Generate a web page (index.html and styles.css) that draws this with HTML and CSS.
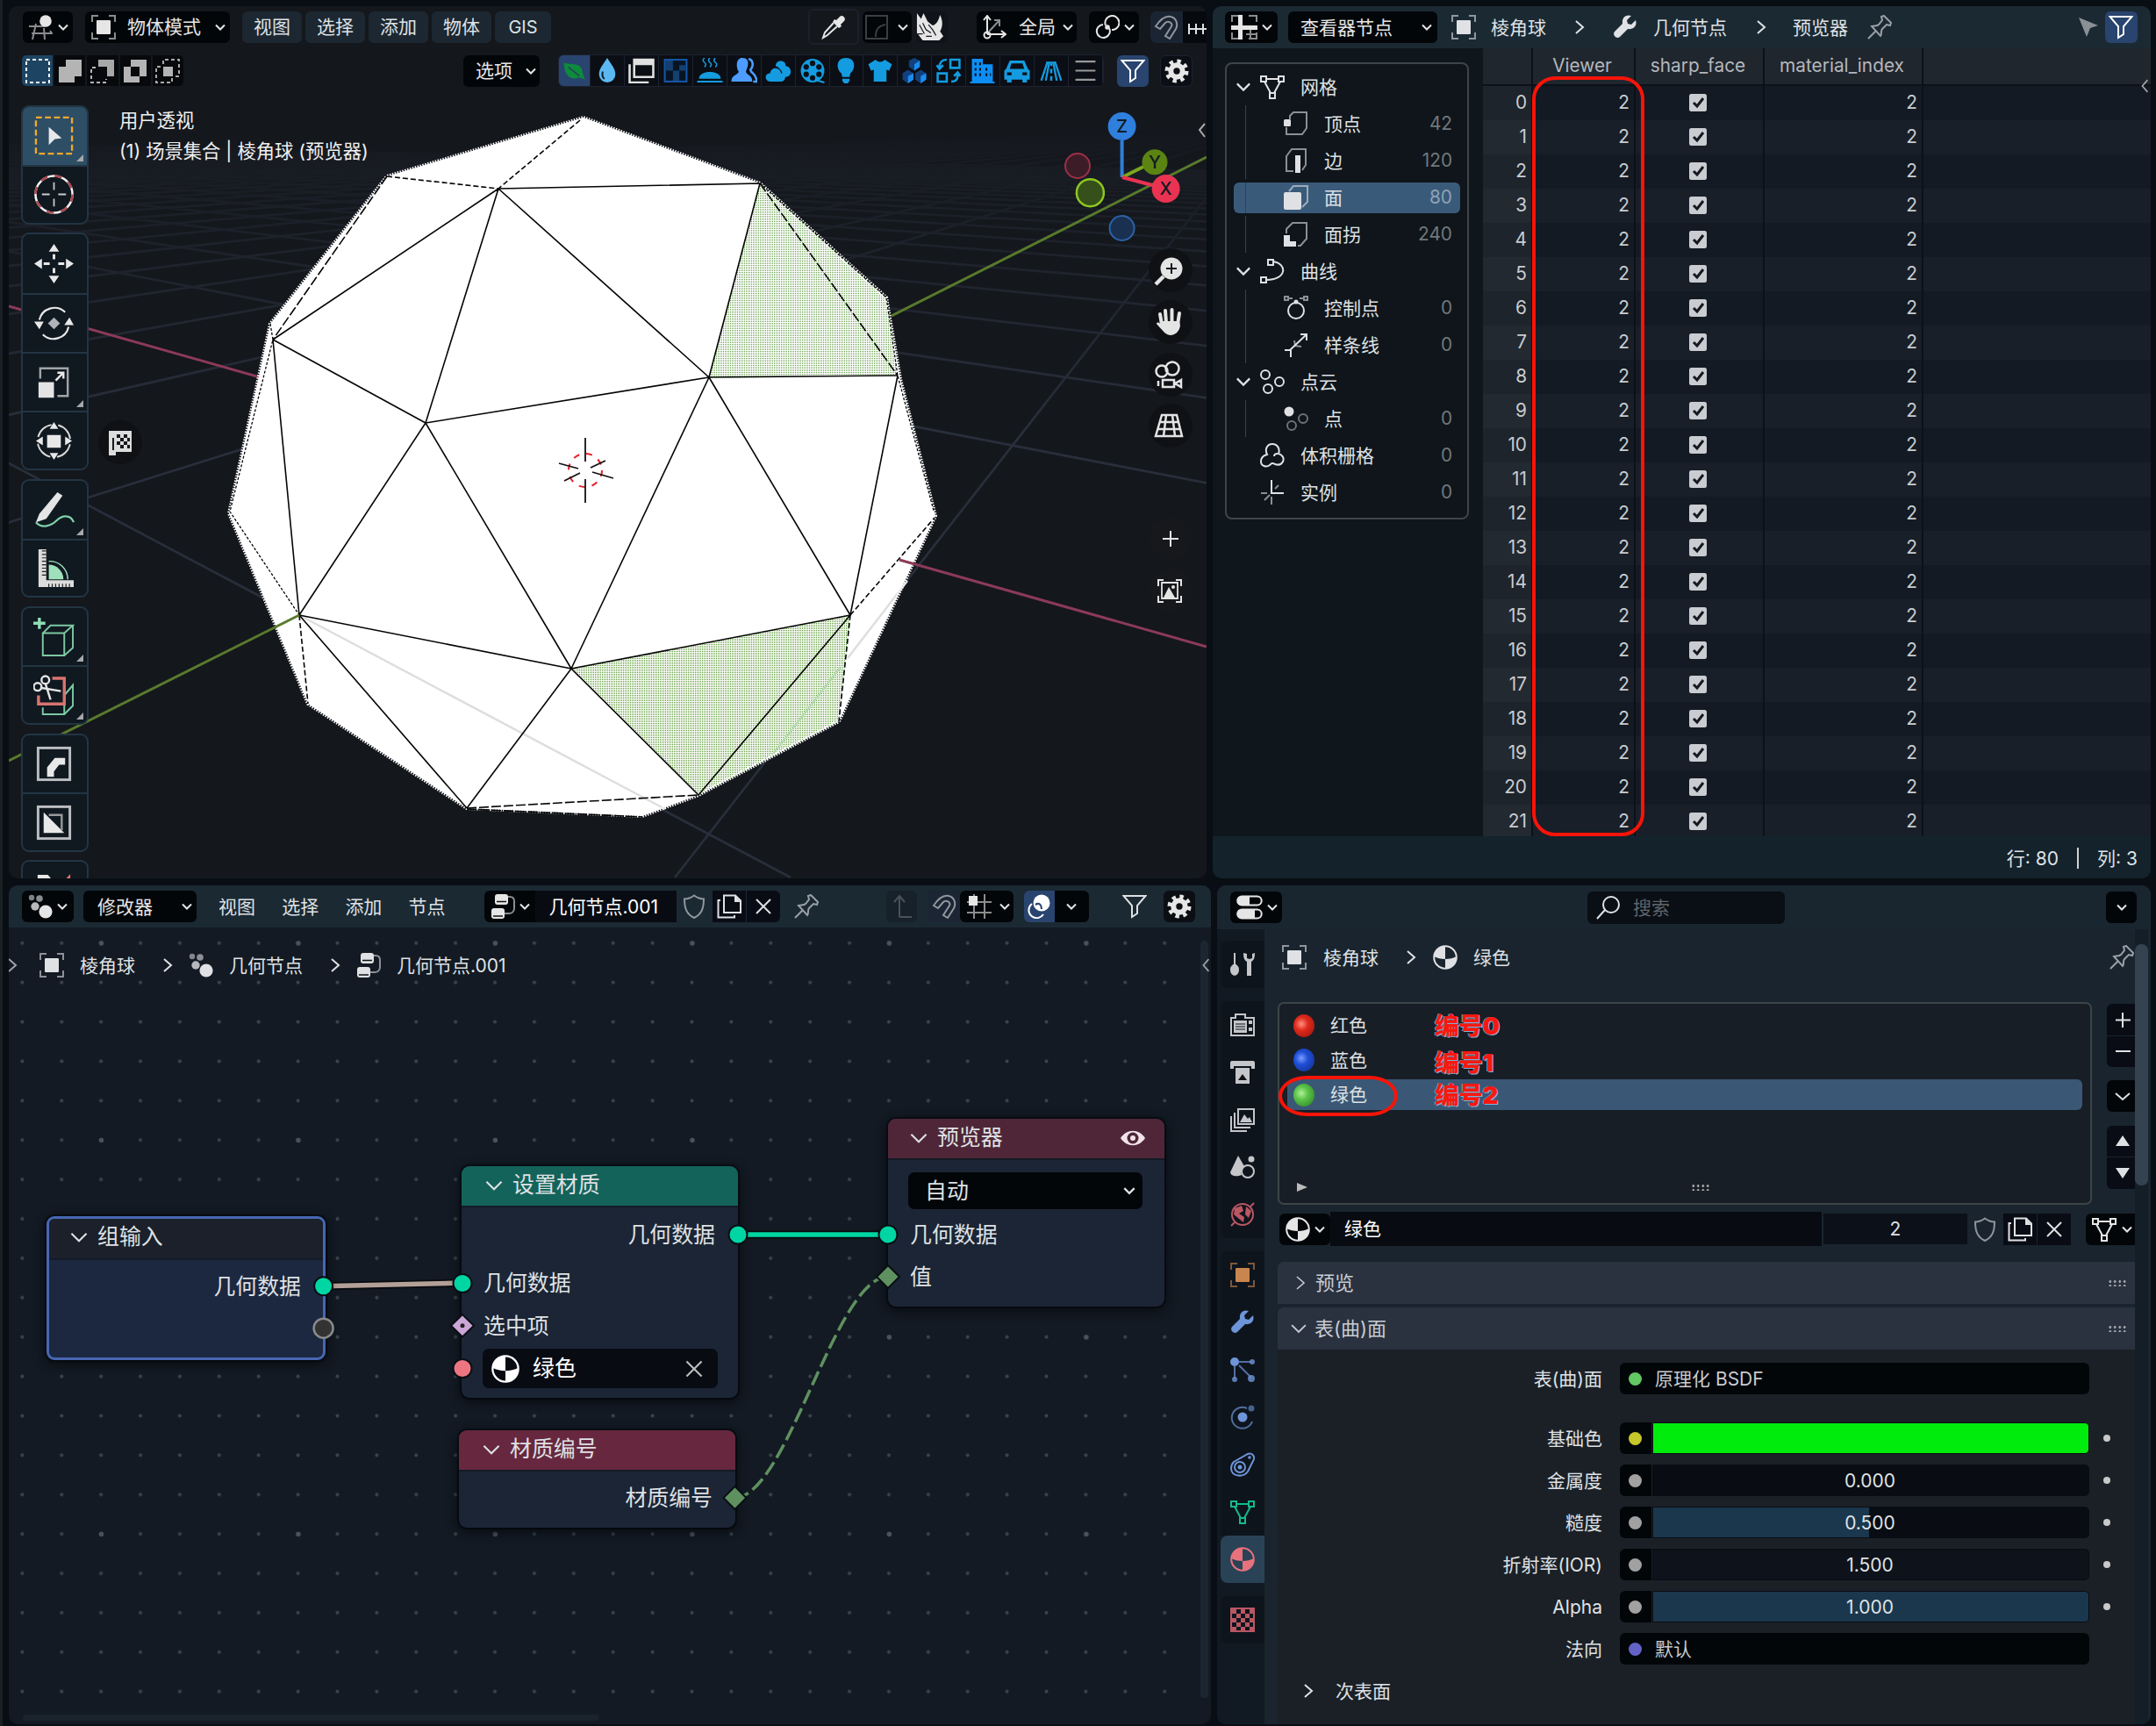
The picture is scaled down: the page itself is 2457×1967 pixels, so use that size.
FILE: index.html
```html
<!DOCTYPE html>
<html lang="zh-CN">
<head>
<meta charset="utf-8">
<title>Blender</title>
<link rel="stylesheet" href="styles.css">
</head>
<body>
<svg class="defs" width="0" height="0">
  <defs>
    <pattern id="dither" width="2" height="2" patternUnits="userSpaceOnUse"><rect width="2" height="2" fill="#fff"/><rect width="1" height="1" fill="#5f9a42"/></pattern>
    <pattern id="dither2" width="2" height="2" patternUnits="userSpaceOnUse"><rect width="2" height="2" fill="#f8fbf5"/><rect width="1" height="1" fill="#579632"/></pattern>
    <linearGradient id="fade" x1="0" y1="150" x2="0" y2="480" gradientUnits="userSpaceOnUse"><stop offset="0" stop-color="#000"/><stop offset=".1" stop-color="#333"/><stop offset="1" stop-color="#fff"/></linearGradient>
    <mask id="far" maskUnits="userSpaceOnUse" x="0" y="0" width="1400" height="1010"><rect width="1400" height="1010" fill="url(#fade)"/></mask>
  </defs>
  <symbol id="chev" viewBox="0 0 14 14"><path class="l" d="M2 4.5l5 5 5-5"/></symbol>
  <symbol id="right" viewBox="0 0 14 20"><path class="l" d="M3 3l8 7-8 7"/></symbol>
  <symbol id="left" viewBox="0 0 14 20"><path class="l" d="M11 2l-7 8 7 8"/></symbol>
  <symbol id="obj" viewBox="0 0 28 28"><path class="l dim" d="M1 8V1h7M20 1h7v7M27 20v7h-7M8 27H1v-7"/><rect x="6" y="6" width="16" height="16" rx="1" fill="currentColor"/></symbol>
  <symbol id="view3d" viewBox="0 0 28 28"><path class="l dim" d="M0 13h16M3 21h24M8 10L4 28M17 15l1 13M9 13h9M24 18l2 3"/><circle cx="19" cy="7" r="6.8" fill="currentColor"/></symbol>
  <symbol id="sheet" viewBox="0 0 30 28"><path class="l dim" d="M1 8V1h10M20 1h9v7M29 20v7h-9M11 27H1v-7M17 22h12M22 17v10"/><path d="M0 12h30v5H0zM8 0h5v28H8z" fill="currentColor"/></symbol>
  <symbol id="geo" viewBox="0 0 28 28"><g fill="currentColor"><circle cx="4" cy="4" r="3.2" opacity=".55"/><circle cx="13" cy="5" r="3.8" opacity=".6"/><circle cx="8" cy="14" r="4.7" opacity=".8"/><circle cx="20" cy="20" r="7.6"/></g></symbol>
  <symbol id="tree" viewBox="0 0 28 28"><g fill="currentColor"><rect x="5" y="0" width="15" height="12" rx="3"/><rect x="1" y="16" width="15" height="12" rx="3"/></g><path d="M7 8.500h11M3 25h11" stroke="#111" stroke-width="1.500"/><path class="l dim" d="M20 3h2c4 0 5 2 5 5v8c0 4-3 6-6 6h-5"/></symbol>
  <symbol id="props" viewBox="0 0 30 28"><rect x="1.200" y="1.500" width="27.500" height="10" rx="5" class="l"/><rect x="1.200" y="16.500" width="27.500" height="10" rx="5" class="l"/><path d="M6 1.500h9v10H6a5 5 0 0 1 0-10zM6 16.500h15v10H6a5 5 0 0 1 0-10z" fill="currentColor"/></symbol>
  <symbol id="mat" viewBox="0 0 28 28"><circle cx="14" cy="14" r="12.800" class="l"/><path d="M14 1v15c-5 0-9-1-13-3C2 6 7 1 14 1zM14 16c5 0 9-1 13-3 0 8-5 14-13 14z" fill="currentColor"/></symbol>
  <symbol id="pin" viewBox="0 0 28 28"><path class="l" d="M1 27l9-9M5 13c3-1 6 0 8-2l4-5-1-4 3-1 8 8-1 3-4-1-5 5c-2 2 0 5-2 8z"/></symbol>
  <symbol id="shield" viewBox="0 0 28 28"><path class="l" d="M14 1.500c4 3 7 4 11 4 0 10-2 17-11 21.500C5 22.500 3 15.500 3 5.500c4 0 7-1 11-4z"/></symbol>
  <symbol id="copy" viewBox="0 0 28 28"><path class="l" d="M8 1.500h13l6 6V21H8zM4 7H1.500v19.500H20V24"/><path d="M20 1v8h7z" fill="currentColor"/></symbol>
  <symbol id="x" viewBox="0 0 28 28"><path class="l" d="M6 6l16 16M22 6L6 22"/></symbol>
  <symbol id="filter" viewBox="0 0 28 28"><path class="l" d="M1.500 2h25l-9.500 11v9l-6 4V13z"/></symbol>
  <symbol id="gear" viewBox="0 0 28 28"><circle cx="14" cy="14" r="6.700" fill="none" stroke="currentColor" stroke-width="6"/><circle cx="14" cy="14" r="11" fill="none" stroke="currentColor" stroke-width="5" stroke-dasharray="4.300 4.340"/></symbol>
  <symbol id="magnet" viewBox="0 0 28 28"><path class="l" d="M2 13C8 4 14 1 19 2c6 1 9 8 6 14l-7 11-5-3 7-11c2-4-4-7-7-4l-6 7z"/></symbol>
  <symbol id="snap" viewBox="0 0 28 28"><path class="l dim" d="M0 9h28M0 21h28M8 0v28M20 0v28"/><rect x="2" y="2" width="10" height="11" fill="currentColor"/></symbol>
  <symbol id="inc" viewBox="0 0 28 28"><path class="l" d="M1 8v12M9 8v12M17 8v12M25 8v12M0 14h28"/></symbol>
  <symbol id="dropper" viewBox="0 0 28 28"><path d="M17 6l4-4c3-3 8 2 5 5l-4 4 1 2-3 2-7-7 2-3z" fill="currentColor"/><path class="l" d="M14 9L4 20l-2 6 5-3L18 13"/></symbol>
  <symbol id="bevel" viewBox="0 0 28 28"><path class="l" d="M2 1h24v26H2z"/><path class="l" d="M13 25c0-8 2-12 11-14"/></symbol>
  <symbol id="rhino" viewBox="0 0 34 34"><path d="M1 0l5 7 3-7 5 10 6 5c5-2 7-6 9-13 4 8 3 15 0 20l4 6-5 5H8L1 24z" fill="currentColor"/><path d="M8 12l4 8 6 4M4 14l6 11M20 20l4 7M2 25h6M12 28h7M15 14l5 6" stroke="#15181d" stroke-width="1.300" fill="none"/></symbol>
  <symbol id="orient" viewBox="0 0 28 28"><path class="l" d="M6 22V2M2 6l4-5 4 5M6 22h20M22 18l5 4-5 4"/><path class="l dim" d="M8 19L20 6M14 6h6v7"/><circle cx="6" cy="23" r="3.500" fill="none" stroke="currentColor" stroke-width="2"/></symbol>
  <symbol id="pivot" viewBox="0 0 28 28"><path class="l" d="M12 12a8 8 0 1 1 7 5M16 15a7.500 7.500 0 1 1-7-4"/><circle cx="14" cy="14" r="2.800" fill="currentColor"/></symbol>
  <symbol id="overlay" viewBox="0 0 28 28"><circle cx="17" cy="10" r="9.500" fill="currentColor"/><path class="l" d="M6 11a9 9 0 1 0 13 12"/><path d="M10 12c4-3 7 0 7 5" fill="none" stroke="#2b4570" stroke-width="2.200"/></symbol>
  <symbol id="up" viewBox="0 0 28 28"><path class="l" d="M12 26V3M6 9l6-7 6 7M12 26h14"/></symbol>
  <symbol id="search" viewBox="0 0 28 28"><circle cx="17" cy="11" r="9" class="l"/><path class="l" d="M10 17L1 27"/></symbol>
  <symbol id="wrench" viewBox="0 0 28 28"><path d="M26 6l-5 5-4-1-1-4 5-5c-6-2-11 2-10 9l-9 9c-3 4 2 9 6 6l9-9c7 1 11-4 9-10z" fill="currentColor"/></symbol>
  <symbol id="mesh" viewBox="0 0 28 28"><path class="l" d="M1 2h6v6H1zM21 2h6v6h-6zM11 21h6v6h-6zM7 5h14M5 8l7 13M23 8l-7 13"/></symbol>
  <symbol id="vert" viewBox="0 0 28 28"><path class="l dim" d="M7 9V5l4-4h15v18l-5 7H3v-8"/><rect x="0" y="9" width="8" height="8" rx="1.500" fill="currentColor"/></symbol>
  <symbol id="edge" viewBox="0 0 28 28"><path class="l dim" d="M11 26H3V9l6-8h16v18l-4 6"/><rect x="13" y="8" width="6" height="20" fill="currentColor"/></symbol>
  <symbol id="face" viewBox="0 0 28 28"><path class="l dim" d="M6 7l5-6h16v18l-6 6"/><rect x="0" y="8" width="20" height="20" rx="2" fill="currentColor"/></symbol>
  <symbol id="corner" viewBox="0 0 28 28"><path class="l dim" d="M3 13V8l7-7h16v18l-7 8h-3"/><path d="M0 15h7v7h7v6H0z" fill="currentColor"/></symbol>
  <symbol id="curve" viewBox="0 0 28 28"><path class="l" d="M9 1h6v6H9zM1 21h6v6H1zM15 3c17 3 15 21-8 21"/></symbol>
  <symbol id="cpt" viewBox="0 0 28 28"><circle cx="14" cy="17" r="9" class="l"/><path class="l dim" d="M1 1h4v4H1zM23 1h4v4h-4zM5 3h5M18 3h5"/><circle cx="14" cy="7" r="2.500" fill="currentColor"/></symbol>
  <symbol id="spline" viewBox="0 0 28 28"><path class="l" d="M7 20L25 3M19 2h7v7M1 20h7v8"/><path class="l dim" d="M12 9l1 6 7 1"/></symbol>
  <symbol id="cloud3" viewBox="0 0 28 28"><circle cx="6" cy="6" r="5" class="l"/><circle cx="22" cy="14" r="5" class="l"/><circle cx="9" cy="22" r="5" class="l"/></symbol>
  <symbol id="pt" viewBox="0 0 28 28"><circle cx="6" cy="6" r="5.500" fill="currentColor"/><g opacity=".45"><circle cx="22" cy="14" r="5" class="l"/><circle cx="9" cy="22" r="5" class="l"/></g></symbol>
  <symbol id="vol" viewBox="0 0 28 28"><path class="l" d="M8 13c-3-6 0-12 6-12s9 6 7 11c4 1 7 5 5 9-2 4-6 4-9 3-3-2-4-1-6 1-4 3-10 1-10-4 0-4 3-7 7-8zM20 12c-3 0-4 1-4 3"/></symbol>
  <symbol id="inst" viewBox="0 0 28 28"><path class="l" d="M13 0v15h14"/><path class="l dim" d="M1 15h7M13 19v9M5 23l6-6M17 10l4-4"/></symbol>
</svg>

<div class="app">
<div class="row top">

<section class="area view3d">
  <svg class="scene" viewBox="10 7 1365 994">
    <g id="floor" mask="url(#far)"></g>
    <path class="ax g" d="M1375 179L1016 360"/><path class="ax r" d="M10 349L300 431"/>
    <polygon fill="#fff" points="665,134 866,209 1010,339 1026,432 1066,588 956,822 796,906 732,930 532,921 351,802 261,585 308,369 441,201"/>
    <polygon fill="url(#dither)" points="866,209 808,430 1023,428 1010,339"/>
    <polygon fill="url(#dither2)" points="651,762 969,701 956,822 796,906"/>
    <path d="M341 701L758 922" stroke="#dedede" stroke-width="2.500"/><path d="M1034 662L966 750" stroke="#dedede" stroke-width="2.500"/><path d="M958 760L878 863" stroke="#b4dcae" stroke-width="2.500"/>
    <path class="rim" d="M665 134L866 209L1010 339L1026 432L1066 588L956 822L796 906L732 930L532 921L351 802L261 585L308 369L441 201Z"/>
    <path class="edge" d="M568 215L866 209M568 215L311 387M568 215L485 482M568 215L808 430M311 387L485 482M311 387L341 701M485 482L808 430M485 482L341 701M485 482L651 762M808 430L866 209M808 430L1023 428M808 430L651 762M808 430L969 701M1023 428L969 701M341 701L651 762M341 701L532 921M651 762L532 921M651 762L969 701M651 762L796 906M969 701L796 906"/>
    <path class="edge dash" d="M661 137L568 215M441 201L568 215M341 701L351 802M969 701L956 822M969 701L1065 590"/>
    <path class="edge long" d="M441 201L311 387M532 921L796 906M866 209L1023 428"/>
    <path class="edge dot" d="M308 369L311 387L262 583L341 701M866 209L1010 339L1023 428L1064 582"/>
    <path class="edge long" d="M532 922L732 931"/>
    <path class="ax g" d="M10 867L341 701"/><path class="ax r" d="M1025 638L1375 737"/>
    <g transform="translate(667 536)"><circle r="19" fill="none" stroke="#e8202a" stroke-width="2" stroke-dasharray="7 8"/><path d="M0-37v27M0 10v27M-30-8l22 6M8 2l24 7M-24 12L-6 3M6-3l17-8" stroke="#111" stroke-width="1.800"/></g>
    <g class="giz">
      <path d="M1278.600 202v-42" stroke="#2f7fdc"/><path d="M1279 202l28-14" stroke="#7aa81c"/><path d="M1279 202l34 9" stroke="#ea3352"/>
      <circle cx="1228" cy="189" r="14" fill="#3c1c27" stroke="#9c3049" stroke-width="2"/><circle cx="1242.400" cy="219.700" r="15.500" fill="#36501c" stroke="#8fc81e" stroke-width="2.500"/><circle cx="1278.600" cy="260" r="14" fill="#1a3050" stroke="#2b63a8" stroke-width="2"/>
      <circle cx="1278.600" cy="144" r="16" fill="#2f7fdc"/><circle cx="1316" cy="184.700" r="14.500" fill="#5b8413"/><circle cx="1328.600" cy="215" r="16" fill="#ea3352"/>
      <text x="1278.600" y="151">Z</text><text x="1316" y="192">Y</text><text x="1328.600" y="222">X</text>
    </g>
    <g class="nav">
      <g fill="#0f1115"><circle cx="1334" cy="308" r="25"/><circle cx="1334" cy="367" r="25"/><circle cx="1334" cy="427" r="25"/><circle cx="1334" cy="485" r="25"/><circle cx="137" cy="504" r="25"/><g fill="#17181b"><circle cx="1334" cy="614" r="25"/><circle cx="1334" cy="673" r="25"/></g></g>
      <circle cx="1335" cy="306" r="12.500" fill="#e4e4e4"/><path d="M1326 315l-9 9" stroke="#e4e4e4" stroke-width="4.500"/><path d="M1335 300v12M1329 306h12" stroke="#15181d" stroke-width="2"/>
      <path d="M1324 370l-2-12M1329 368l-1-14M1335.500 368v-15M1342 370l2-13" stroke="#e4e4e4" stroke-width="4" stroke-linecap="round"/><path d="M1322 366h22l1 5c-1 7-6 11-11 11s-8-4-16-13c0-2 3-2 4 0z" fill="#e4e4e4"/>
      <g fill="none" stroke="#e4e4e4" stroke-width="2.500"><circle cx="1324" cy="423" r="6.500"/><circle cx="1336" cy="420" r="7.500"/><path d="M1325 433h13v8h-13zM1320 434v6M1346 433l-7 4 7 4z"/><path d="M1324 473h17l6 24h-30zM1321 481h22M1319 489h27M1329 473l-3 24M1336 473l3 24"/><path d="M1334 605v18M1325 614h18" stroke-width="2"/><path d="M1320 668v-7h6M1340 661h6v7M1346 679v7h-6M1326 686h-6v-7" stroke-width="2"/><path d="M1324 664h18v18h-18z" stroke-width="1.800"/></g>
      <path d="M1326 681l6-12 7 12z" fill="#e4e4e4"/><circle cx="1337" cy="669" r="2" fill="#e4e4e4"/>
      <path d="M124 491h26v24h-18v4h-8z" fill="#dcdcdc"/><path d="M133 495h4v4h-4zM141 495h4v4h-4zM137 499h4v4h-4zM145 499h3v4h-3zM133 503h4v4h-4zM141 503h4v4h-4zM137 507h4v4h-4zM145 507h3v4h-3zM128 499h2v14h-2z" fill="#15181d"/>
      <path d="M1373 141l-6 7 6 8" fill="none" stroke="#aaa" stroke-width="2"/>
    </g>
  </svg>

  <header class="bar one">
    <div class="btn w57"><svg class="i"><use href="#view3d"/></svg><svg class="c"><use href="#chev"/></svg></div>
    <div class="btn mode"><svg class="i"><use href="#obj"/></svg><span>物体模式</span><svg class="c"><use href="#chev"/></svg></div>
    <nav class="menus"><span>视图</span><span>选择</span><span>添加</span><span>物体</span><span class="gis">GIS</span></nav>
    <div class="push"></div>
    <div class="btn drop"><svg class="i"><use href="#dropper"/></svg></div>
    <div class="btn bev"><svg class="i off"><use href="#bevel"/></svg><svg class="c"><use href="#chev"/></svg></div>
    <div class="btn rh"><svg class="r"><use href="#rhino"/></svg></div>
    <div class="btn glob"><svg class="i"><use href="#orient"/></svg><span>全局</span><svg class="c"><use href="#chev"/></svg></div>
    <div class="btn w57 piv"><svg class="i"><use href="#pivot"/></svg><svg class="c"><use href="#chev"/></svg></div>
    <div class="mag"><div class="navy"><svg class="i half"><use href="#magnet"/></svg></div><div class="inc"><svg class="i"><use href="#inc"/></svg></div></div>
  </header>

  <div class="bar two">
    <div class="sel">
      <div class="on"><svg viewBox="0 0 28 28"><path d="M1 1h26v26H1z" fill="none" stroke="#fff" stroke-width="2" stroke-dasharray="4 3"/></svg></div>
      <div><svg viewBox="0 0 28 28"><path d="M9 1h18v19h-8v7H1V9h8z" fill="#b4b4b4"/></svg></div>
      <div><svg viewBox="0 0 28 28"><path d="M9 1h18v19h-8V9H9z" fill="#a8a8a8"/><path d="M6 10H1v17h17v-4" fill="none" stroke="#b4b4b4" stroke-width="2" stroke-dasharray="4 3"/></svg></div>
      <div><svg viewBox="0 0 28 28"><path fill-rule="evenodd" d="M9 1h18v19h-8v7H1V9h8zM9 9v11h10V9z" fill="#b4b4b4"/></svg></div>
      <div><svg viewBox="0 0 28 28"><path d="M9 6V1h18v19h-5M6 9H1v18h18v-5" fill="none" stroke="#a8a8a8" stroke-width="2" stroke-dasharray="4 3"/><rect x="9" y="9" width="11" height="11" fill="#b4b4b4"/></svg></div>
    </div>
    <div class="btn opt"><span>选项</span><svg class="c"><use href="#chev"/></svg></div>
    <div class="strip">
      <div class="on"><svg viewBox="0 0 28 28"><path d="M3 5c8 3 18 0 20 8 1 4 1 7 4 11-4-2-6-3-9-2C8 25 3 16 3 5z" fill="#0e8a3c"/><path d="M8 10l12 10" stroke="#245" stroke-width="1.500"/></svg></div>
      <div><svg viewBox="0 0 28 28"><path d="M14 0c5 8 9 12 9 18a9 9 0 0 1-18 0C5 12 9 8 14 0z" fill="#5bb8f0"/><path d="M9 15c-1 5 0 7 2 8" stroke="#123" stroke-width="2" fill="none"/></svg></div>
      <div><svg viewBox="0 0 28 28"><path d="M6 2h21v19H6zM1 7v20h21" fill="none" stroke="#e0e0e0" stroke-width="2.500"/><path d="M6 2h21v6H6z" fill="#e0e0e0"/></svg></div>
      <div><svg viewBox="0 0 28 28"><rect x="2" y="2" width="24" height="24" fill="#071426" stroke="#1557a8" stroke-width="2"/><path d="M3 3h8v11H3zM11 14h7v11h-7zM18 8h7v6h-7z" fill="#15406e"/></svg></div>
      <div><svg viewBox="0 0 28 28"><path d="M2 23c0-10 24-10 24 0zM0 25h28v2H0z" fill="#149be0"/><path d="M8 0q-3 3 0 5t0 5M14 0q-3 3 0 5t0 5M20 0q-3 3 0 5t0 5" fill="none" stroke="#149be0" stroke-width="1.500"/></svg></div>
      <div><svg viewBox="0 0 28 28"><path d="M12 0c6 0 7 4 6 9l-2 6c0 4 7 3 7 11H0c0-8 8-7 8-11C5 10 5 0 12 0z" fill="#4c9dff"/><path d="M19 1c6 2 5 9 2 12 0 4 6 3 7 13h-4" fill="none" stroke="#4c9dff" stroke-width="2.500"/></svg></div>
      <div><svg viewBox="0 0 28 28"><path d="M11 9c0-8 12-7 11 0 7 0 8 12 0 12h-3c0-6-3-10-8-12zM5 26c-7-1-6-9 0-9 1-8 11-7 12 0 6 0 6 9 0 9z" fill="#149be0"/></svg></div>
      <div><svg viewBox="0 0 28 28"><circle cx="14" cy="14" r="13" fill="#149be0"/><g fill="#0a1018"><circle cx="14" cy="6" r="3"/><circle cx="14" cy="22" r="3"/><circle cx="7" cy="10" r="3"/><circle cx="21" cy="10" r="3"/><circle cx="7" cy="18" r="3"/><circle cx="21" cy="18" r="3"/></g><path d="M20 25l7 2" stroke="#149be0" stroke-width="2"/></svg></div>
      <div><svg viewBox="0 0 28 28"><path d="M14 0c11 0 11 12 5 17l-1 4h-8l-1-4C3 12 3 0 14 0zM10 23h8v2l-2 3h-4l-2-3z" fill="#149be0"/></svg></div>
      <div><svg viewBox="0 0 28 28"><path d="M9 2c2 3 8 3 10 0l8 5-3 7-3-1v13H7V13l-3 1-3-7z" fill="#149be0"/></svg></div>
      <div><svg viewBox="0 0 28 28"><path d="M14 0l6 3v7l-6 4-6-4V3zM7 13l6 4v7l-6 4-6-4v-7zM21 13l6 4v7l-6 4-6-4v-7z" fill="#12407c"/><path d="M14 7l6-4v7l-6 4zM7 20l6-3v7l-6 4zM21 20l6-3v7l-6 4z" fill="#1a8cf0"/></svg></div>
      <div><svg viewBox="0 0 28 28"><g fill="none" stroke="#149be0" stroke-width="2.500"><path d="M16 2h10v9H16zM2 17h10v9H2zM12 2C6 2 4 5 4 11M1 8l3 4 4-4M17 26c6 0 7-3 7-8M20 20l4-4 3 4"/></g></svg></div>
      <div><svg viewBox="0 0 28 28"><path fill-rule="evenodd" d="M2 1h12v6h11v19h2v2H0v-2h2zM5 5v3h2V5zm5 0v3h2V5zM5 11v3h2v-3zm5 0v3h2v-3zm-5 6v3h2v-3zm5 0v3h2v-3zm7-6v3h2v-3zm0 6v3h2v-3zm5 0v3h1v-3z" fill="#0c8ef5"/></svg></div>
      <div><svg viewBox="0 0 28 28"><path fill-rule="evenodd" d="M6 3h16l4 9 2 2v10h-3v3h-5v-3H8v3H3v-3H0V14l2-2zM8 6l-2 6h16l-2-6zM3 16v3h5v-3zm17 0v3h5v-3z" fill="#149be0"/></svg></div>
      <div><svg viewBox="0 0 28 28"><path d="M10 4L3 25M18 4l7 21M8 25L12 4M20 25L16 4" stroke="#149be0" stroke-width="2.200"/><path d="M14 4v5M14 12v5M14 20v5" stroke="#149be0" stroke-width="2.500"/></svg></div>
      <div><svg viewBox="0 0 28 28"><path d="M3 4h22M3 14h22M3 24h22" stroke="#999" stroke-width="2"/></svg></div>
    </div>
    <div class="btn blue f"><svg class="i"><use href="#filter"/></svg></div>
    <div class="btn g"><svg class="i"><use href="#gear"/></svg></div>
  </div>

  <div class="lower">
    <div class="tools">
      <div class="grp">
        <div class="tool on more"><svg viewBox="0 0 48 48"><rect x="3" y="3" width="42" height="42" fill="none" stroke="#f0a92c" stroke-width="2.400" stroke-dasharray="7 3.500"/><path d="M18 14l15 13-8 1-7 7z" fill="#e8e8e8"/></svg></div>
        <div class="tool"><svg viewBox="0 0 48 48"><circle cx="24" cy="24" r="21.500" fill="none" stroke="#f2f2f2" stroke-width="2.600"/><circle cx="24" cy="24" r="21.500" fill="none" stroke="#a8474c" stroke-width="2.600" stroke-dasharray="8.500 8.400"/><path d="M24 10v9M24 29v9M10 24h9M29 24h9" stroke="#ccc" stroke-width="1.800"/></svg></div>
      </div>
      <div class="grp tall">
        <div class="tool"><svg viewBox="0 0 48 48"><path d="M24 1l6 9H18zM24 47l6-9H18zM1 24l9-6v12zM47 24l-9-6v12z" fill="#e8e8e8"/><path d="M24 13v6M24 29v6M12 24h7M29 24h7" stroke="#e8e8e8" stroke-width="3"/></svg></div>
        <div class="tool"><svg viewBox="0 0 48 48"><path d="M7 20a18 18 0 0 1 30-9M41 28a18 18 0 0 1-30 9" fill="none" stroke="#e8e8e8" stroke-width="2.200"/><path d="M1 22h11l-5 9zM36 26h11l-5-9z" fill="#e8e8e8"/><path d="M24 17l7 7-7 7-7-7z" fill="#b0b4b8"/></svg></div>
        <div class="tool more"><svg viewBox="0 0 48 48"><path d="M8 20V8h32v32H28" fill="none" stroke="#a0a4a8" stroke-width="2.500"/><path d="M6 24h18v18H6z" fill="#e4e4e4"/><path d="M26 22l8-8M28 13h7v7" fill="none" stroke="#e8e8e8" stroke-width="2.500"/></svg></div>
        <div class="tool"><svg viewBox="0 0 48 48"><circle cx="24" cy="24" r="19" fill="none" stroke="#d8d8d8" stroke-width="2" stroke-dasharray="22 8" stroke-dashoffset="-4"/><path d="M24 2l5 8H19zM24 46l5-8H19zM3 24l8-5v10zM45 24l-8-5v10zM16 17h16v15H16z" fill="#e8e8e8"/></svg></div>
      </div>
      <div class="grp">
        <div class="tool more"><svg viewBox="0 0 48 48"><path d="M28 4l6 4-19 27-12 4 4-10z" fill="#e4e4e4"/><path d="M3 39c7 8 18 4 24-2s16-8 20 2" fill="none" stroke="#7fd0a8" stroke-width="2.400"/></svg></div>
        <div class="tool"><svg viewBox="0 0 48 48"><path d="M6 2h9v36h32v8H6z" fill="#dcdcdc"/><path d="M10 4h5M10 8h5M10 12h5M10 16h5M10 20h5M10 24h5M10 28h5M10 32h5M18 42v4M22 42v4M26 42v4M30 42v4M34 42v4M38 42v4M42 42v4" stroke="#222" stroke-width="1.200"/><path d="M18 20a17 17 0 0 1 17 17H18z" fill="#9fe0ba"/><path d="M18 16a21 21 0 0 1 22 21" fill="none" stroke="#9fe0ba" stroke-width="1.500"/></svg></div>
      </div>
      <div class="grp">
        <div class="tool more"><svg viewBox="0 0 48 48"><path d="M7 2v13M0 8.500h14" stroke="#8fdcb4" stroke-width="3.500"/><path d="M11 20h25v26H11zM11 20l9-9h26l-10 9M46 11v26l-10 9" fill="none" stroke="#7cc8a2" stroke-width="2"/></svg></div>
        <div class="tool more"><svg viewBox="0 0 48 48"><path d="M11 38v8h25V26M36 24l10-12v24l-10 10" fill="none" stroke="#7cc8a2" stroke-width="2"/><path d="M22 4h14v30H6V24" fill="none" stroke="#d87470" stroke-width="3.500"/><path d="M14 10l6 19M8 15l24 4" stroke="#e4e4e4" stroke-width="2.500"/><circle cx="14" cy="6" r="4.500" fill="none" stroke="#e4e4e4" stroke-width="2.500"/><circle cx="5" cy="14" r="4.500" fill="none" stroke="#e4e4e4" stroke-width="2.500"/></svg></div>
      </div>
      <div class="grp">
        <div class="tool"><svg viewBox="0 0 48 48"><rect x="5.500" y="5.500" width="37" height="37" fill="none" stroke="#bcbec2" stroke-width="3"/><path d="M16 39V28l9-11h12v8h-7l-6 8v6z" fill="#e8e8e8"/></svg></div>
        <div class="tool"><svg viewBox="0 0 48 48"><rect x="5.500" y="5.500" width="37" height="37" fill="none" stroke="#bcbec2" stroke-width="3"/><path d="M12 12l24 24H12z" fill="#e8e8e8"/><path d="M18 15h15v18" fill="none" stroke="#999" stroke-width="2.500"/></svg></div>
      </div>
      <div class="grp"><div class="tool"><svg viewBox="0 0 48 48"><path d="M5 5h12l8 10H5z" fill="#e8e8e8"/><path d="M34 14l9-10v10z" fill="#d87470"/></svg></div></div>
    </div>
    <div class="info"><p>用户透视</p><p>(1) 场景集合 | 棱角球 (预览器)</p></div>
  </div>
</section>

<section class="area sheet">
  <header class="head">
    <div class="btn w60"><svg class="i w30"><use href="#sheet"/></svg><svg class="c"><use href="#chev"/></svg></div>
    <div class="btn vn"><span>查看器节点</span><svg class="c"><use href="#chev"/></svg></div>
    <svg class="i a1"><use href="#obj"/></svg><span class="a2">棱角球</span><svg class="sep"><use href="#right"/></svg><svg class="i a3"><use href="#wrench"/></svg><span class="a4">几何节点</span><svg class="sep a5"><use href="#right"/></svg><span class="a6">预览器</span><svg class="i a7 gray"><use href="#pin"/></svg>
    <div class="push"></div>
    <svg class="cur" viewBox="0 0 22 22"><path d="M0 0l22 9-9 3-4 10z" fill="#8b9096"/></svg>
    <div class="btn blue f"><svg class="i"><use href="#filter"/></svg></div>
  </header>
  <div class="sheetbody">
    <aside>
      <ul class="tree">
        <li><svg class="c"><use href="#chev"/></svg><svg class="i"><use href="#mesh"/></svg><span>网格</span></li>
        <li class="k"><svg class="i"><use href="#vert"/></svg><span>顶点</span><b>42</b></li>
        <li class="k"><svg class="i"><use href="#edge"/></svg><span>边</span><b>120</b></li>
        <li class="k cursel"><svg class="i"><use href="#face"/></svg><span>面</span><b>80</b></li>
        <li class="k"><svg class="i"><use href="#corner"/></svg><span>面拐</span><b>240</b></li>
        <li><svg class="c"><use href="#chev"/></svg><svg class="i"><use href="#curve"/></svg><span>曲线</span></li>
        <li class="k"><svg class="i"><use href="#cpt"/></svg><span>控制点</span><b>0</b></li>
        <li class="k"><svg class="i"><use href="#spline"/></svg><span>样条线</span><b>0</b></li>
        <li><svg class="c"><use href="#chev"/></svg><svg class="i"><use href="#cloud3"/></svg><span>点云</span></li>
        <li class="k"><svg class="i"><use href="#pt"/></svg><span>点</span><b>0</b></li>
        <li class="n"><svg class="i"><use href="#vol"/></svg><span>体积栅格</span><b>0</b></li>
        <li class="n"><svg class="i"><use href="#inst"/></svg><span>实例</span><b>0</b></li>
      </ul>
    </aside>
    <div class="table">
      <div class="tr th"><i></i><span>Viewer</span><span>sharp_face</span><span>material_index</span><em></em></div>
      <div id="rows"></div>
      <div class="mark"></div>
      <svg class="tog"><use href="#left"/></svg>
    </div>
  </div>
  <footer><span>行: 80</span><i></i><span>列: 3</span></footer>
</section>
</div>

<div class="row bottom">
<section class="area nodes">
  <header class="head">
    <div class="btn w59"><svg class="i"><use href="#geo"/></svg><svg class="c"><use href="#chev"/></svg></div>
    <div class="btn mod"><span>修改器</span><svg class="c"><use href="#chev"/></svg></div>
    <nav class="flat"><span>视图</span><span>选择</span><span>添加</span><span>节点</span></nav>
    <div class="idf"><div class="btn w58"><svg class="i"><use href="#tree"/></svg><svg class="c"><use href="#chev"/></svg></div><div class="name">几何节点.001</div><div class="cell half"><svg class="i"><use href="#shield"/></svg></div><div class="cell dk"><svg class="i"><use href="#copy"/></svg></div><div class="cell dk"><svg class="i"><use href="#x"/></svg></div></div>
    <svg class="i gray np"><use href="#pin"/></svg>
    <div class="cell upb"><svg class="i off"><use href="#up"/></svg></div>
    <div class="cell mg half"><svg class="i"><use href="#magnet"/></svg></div>
    <div class="btn sn"><svg class="i"><use href="#snap"/></svg><svg class="c"><use href="#chev"/></svg></div>
    <div class="btn blue ov"><svg class="i"><use href="#overlay"/></svg></div><div class="btn ovd"><svg class="c"><use href="#chev"/></svg></div>
    <svg class="i fl"><use href="#filter"/></svg>
    <div class="btn gr"><svg class="i"><use href="#gear"/></svg></div>
  </header>
  <div class="canvas">
    <svg class="wires" viewBox="10 1057 1370 908">
      <path d="M369 1465.700L527 1462" stroke="#080c10" stroke-width="9"/><path d="M369 1465.700L527 1462" stroke="#b3a097" stroke-width="5.500"/>
      <path d="M841 1407H1012" stroke="#080c10" stroke-width="9"/><path d="M841 1407H1012" stroke="#00d6a3" stroke-width="5.500"/>
      <path d="M837 1707C897 1707 952 1455 1012 1455" fill="none" stroke="#5f9160" stroke-width="3.500" stroke-dasharray="17 6"/>
    </svg>
    <div class="crumbs"><svg class="sep e0"><use href="#right"/></svg><svg class="i e1"><use href="#obj"/></svg><span>棱角球</span><svg class="sep"><use href="#right"/></svg><svg class="i"><use href="#geo"/></svg><span>几何节点</span><svg class="sep"><use href="#right"/></svg><svg class="i"><use href="#tree"/></svg><span>几何节点.001</span></div>
    <article class="node n1"><h3><svg class="c"><use href="#chev"/></svg>组输入</h3><p class="out">几何数据</p></article>
    <article class="node n2"><h3><svg class="c"><use href="#chev"/></svg>设置材质</h3><p class="out">几何数据</p><p class="in">几何数据</p><p class="in">选中项</p><div class="field"><svg class="i"><use href="#mat"/></svg><span>绿色</span><svg class="i fx"><use href="#x"/></svg></div></article>
    <article class="node n3"><h3><svg class="c"><use href="#chev"/></svg>材质编号</h3><p class="out">材质编号</p></article>
    <article class="node n4"><h3><svg class="c"><use href="#chev"/></svg>预览器<svg class="eye" viewBox="0 0 30 20"><path d="M1 10C8-1 22-1 29 10 22 21 8 21 1 10z" fill="#f0e4e8"/><circle cx="15" cy="10" r="6.500" fill="#4f2638"/><circle cx="15" cy="10" r="3" fill="#f0e4e8"/></svg></h3><div class="field"><span>自动</span><svg class="c"><use href="#chev"/></svg></div><p class="in">几何数据</p><p class="in">值</p></article>
    <svg class="wires" viewBox="10 1057 1370 908"><g stroke="#0a0f14" stroke-width="2">
      <circle cx="368.600" cy="1465.700" r="10.500" fill="#00d6a3"/><circle cx="368.600" cy="1513.700" r="11" fill="#333" stroke="#8a8a8a" stroke-width="2.500"/>
      <circle cx="841" cy="1407" r="10.500" fill="#00d6a3"/><circle cx="527" cy="1462.500" r="10.500" fill="#00d6a3"/><circle cx="1012" cy="1407" r="10.500" fill="#00d6a3"/><circle cx="527" cy="1559.500" r="10.500" fill="#ed7581"/>
      <path d="M527 1498l13 12.700-13 12.700-13-12.700z" fill="#cca6d6"/><circle cx="527" cy="1510.700" r="2.500" fill="#222" stroke="none"/>
      <path d="M837.500 1694l13 13-13 13-13-13zM1012 1442l13 13-13 13-13-13z" fill="#5f9160"/></g>
    </svg>
    <div class="vs"></div><div class="hs"></div><svg class="tog"><use href="#left"/></svg>
  </div>
</section>

<section class="area props">
  <header class="head">
    <div class="btn w59"><svg class="i w30"><use href="#props"/></svg><svg class="c"><use href="#chev"/></svg></div>
    <div class="search"><svg class="i"><use href="#search"/></svg><span>搜索</span></div>
    <div class="btn pd"><svg class="c"><use href="#chev"/></svg></div>
  </header>
  <div class="pbody">
    <nav class="tabs">
      <div class="tab solo"><svg viewBox="0 0 28 28"><path d="M5 1v14" class="l"/><path d="M0 20c0-4 2-4 3-6h4c1 2 3 2 3 6 0 9-10 9-10 0zM15 1c0 6 1 8 4 10v16h5V11c3-2 4-4 4-10l-3 1v5l-3 1-3-1V2z" fill="currentColor"/></svg></div>
      <div class="tab first"><svg viewBox="0 0 28 28"><path class="l" d="M1 6h5V2h11v4h10v20H1z"/><path d="M4 9h15v14H4zM21 9h4v4h-4zM21 17h4v4h-4z" fill="currentColor"/><path d="M6 13h11M6 16h11M6 19h11" stroke="#0e141c"/></svg></div>
      <div class="tab"><svg viewBox="0 0 28 28"><path d="M0 3q0-2 2-2h24q2 0 2 2v7h-4V7H4v3H0zM6 9h16v18H6z" fill="currentColor"/><path d="M9 23l5-7 5 7z" fill="#111"/></svg></div>
      <div class="tab"><svg viewBox="0 0 28 28"><path d="M9 2h18v17H9zM5 6v17h18M1 10v17h18" class="l"/><path d="M11 17l5-9 4 5 2-2 3 6z" fill="currentColor"/></svg></div>
      <div class="tab"><svg viewBox="0 0 28 28"><path d="M9 1l7 12c-4 3-4 8-3 10C8 25 1 25 0 20z" fill="currentColor"/><circle cx="20" cy="19" r="7" class="l"/><circle cx="24" cy="5" r="3.500" fill="currentColor"/></svg></div>
      <div class="tab pink last"><svg viewBox="0 0 28 28"><circle cx="14" cy="14" r="12" class="l"/><path d="M5 7l8-3 2 6-5 3 6 4-1 6-5-4-6-5zM18 5l6 5-3 8-4-4z" fill="currentColor"/><path class="l" d="M23 5l4-4M5 23l-4 4"/></svg></div>
      <div class="tab orange first"><svg><use href="#obj"/></svg></div>
      <div class="tab bl"><svg><use href="#wrench"/></svg></div>
      <div class="tab bl"><svg viewBox="0 0 28 28"><circle cx="5" cy="5" r="5" fill="currentColor"/><path class="l" d="M10 5h14M5 10v14M10 9l14 14" opacity=".7"/><g fill="currentColor" opacity=".8"><circle cx="25" cy="5" r="3"/><circle cx="5" cy="25" r="3"/><circle cx="24" cy="24" r="4"/></g></svg></div>
      <div class="tab bl"><svg viewBox="0 0 28 28"><path class="l" d="M19 4A12 12 0 1 0 25 19" opacity=".7"/><circle cx="14" cy="14" r="5.500" fill="currentColor"/><circle cx="24" cy="4" r="3.500" fill="currentColor" opacity=".6"/></svg></div>
      <div class="tab bl"><svg viewBox="0 0 28 28"><path class="l" d="M4 11L20 2c4-2 8 2 7 6l-7 14c-5 7-18 6-19-3 0-3 1-6 3-8z"/><circle cx="11" cy="17" r="6" class="l"/><circle cx="11" cy="17" r="2.500" fill="currentColor"/><circle cx="22" cy="6" r="1.800" fill="currentColor"/></svg></div>
      <div class="tab green"><svg><use href="#mesh"/></svg></div>
      <div class="tab act"><svg><use href="#mat"/></svg></div>
      <div class="tab pink first last"><svg viewBox="0 0 28 28"><path class="l" d="M1 1h26v26H1z"/><path d="M2 2h5v5H2zM12 2h5v5h-5zM22 2h5v5h-5zM7 7h5v5H7zM17 7h5v5h-5zM2 12h5v5H2zM12 12h5v5h-5zM22 12h5v5h-5zM7 17h5v5H7zM17 17h5v5h-5zM2 22h5v5H2zM12 22h5v5h-5zM22 22h5v5h-5z" fill="currentColor"/></svg></div>
    </nav>
    <main>
      <div class="pc"><svg class="i"><use href="#obj"/></svg><span>棱角球</span><svg class="sep"><use href="#right"/></svg><svg class="i"><use href="#mat"/></svg><span class="lst">绿色</span><svg class="i gray pp"><use href="#pin"/></svg></div>
      <div class="slots">
        <div class="list">
          <div class="slot"><i class="ball red"></i><span>红色</span><strong>编号0</strong></div>
          <div class="slot"><i class="ball blu"></i><span>蓝色</span><strong class="low">编号1</strong></div>
          <div class="slot sl"><i class="ball grn"></i><span>绿色</span><strong>编号2</strong><div class="ring"></div></div>
          <div class="lf"><svg viewBox="0 0 12 12"><path d="M0 1l12 5-12 5z" fill="#bbb"/></svg><i class="grip"></i></div>
        </div>
        <div class="side"><div class="cell dk t"><svg class="i"><path d="M14 6v17M6 14.500h17" class="l"/></svg></div><div class="cell dk b"><svg class="i"><path d="M6 14h17" class="l"/></svg></div><div class="cell bk v"><svg class="i"><path d="M6 11l8 7 8-7" class="l"/></svg></div><div class="cell dk t"><svg class="i"><path d="M6 20l8-12 8 12z" fill="currentColor"/></svg></div><div class="cell dk b"><svg class="i"><path d="M6 8l8 12 8-12z" fill="currentColor"/></svg></div></div>
      </div>
      <div class="idrow"><div class="btn w58"><svg class="i"><use href="#mat"/></svg><svg class="c"><use href="#chev"/></svg></div><div class="name">绿色</div><div class="users">2</div><div class="cell half"><svg class="i"><use href="#shield"/></svg></div><div class="cell dk"><svg class="i"><use href="#copy"/></svg></div><div class="cell dk"><svg class="i"><use href="#x"/></svg></div><div class="btn lk"><svg class="i"><use href="#mesh"/></svg><svg class="c"><use href="#chev"/></svg></div></div>
      <div class="panel"><svg class="sep"><use href="#right"/></svg><span>预览</span><i class="grip"></i></div>
      <div class="panel open"><svg class="cc"><use href="#chev"/></svg><span>表(曲)面</span><i class="grip"></i></div>
      <div class="form">
        <div class="fr wide"><label>表(曲)面</label><div class="val"><i class="so lg"></i><span>原理化 BSDF</span></div></div>
        <div class="fr"><label>基础色</label><div class="sk"><i class="so yl"></i></div><div class="sld color"></div><i class="kf"></i></div>
        <div class="fr"><label>金属度</label><div class="sk"><i class="so"></i></div><div class="sld">0.000</div><i class="kf"></i></div>
        <div class="fr"><label>糙度</label><div class="sk"><i class="so"></i></div><div class="sld halfway">0.500</div><i class="kf"></i></div>
        <div class="fr"><label>折射率(IOR)</label><div class="sk"><i class="so"></i></div><div class="sld plain">1.500</div><i class="kf"></i></div>
        <div class="fr"><label>Alpha</label><div class="sk"><i class="so"></i></div><div class="sld full">1.000</div><i class="kf"></i></div>
        <div class="fr"><label>法向</label><div class="val"><i class="so pu"></i><span>默认</span></div></div>
        <div class="sub"><svg class="sep"><use href="#right"/></svg><span>次表面</span></div>
      </div>
    </main>
    <div class="sb"><i></i></div>
  </div>
</section>
</div>
</div>
<script src="script.js"></script>
</body>
</html>
```
FILE: script.js
```js
// Spreadsheet rows
const rows = document.getElementById('rows');
for (let n = 0; n < 22; n++) {
  const tr = document.createElement('div');
  tr.className = 'tr';
  tr.innerHTML = '<i>' + n + '</i><span>2</span><span><svg class="chk" viewBox="0 0 20 20"><rect width="20" height="20" rx="2.500" fill="#c9ccd0"/><path d="M5 10l4 4 7-9" fill="none" stroke="#14191f" stroke-width="3"/></svg></span><span>2</span><em></em>';
  rows.appendChild(tr);
}

// Perspective floor grid: both line families meet on the horizon at y = 148
const floor = document.getElementById('floor');
let d = '';
for (let k = -1; k < 26; k++) {
  if (k !== 0) d += 'M-707 148L' + (2301 + 1400 * k) + ' 1000';
}
for (let k = 1; k > -26; k--) {
  if (k !== 0) d += 'M1435 148L' + (-255 + 1024 * k) + ' 1000';
}
const lines = document.createElementNS('http://www.w3.org/2000/svg', 'path');
lines.setAttribute('d', d);
lines.setAttribute('class', 'gridline');
floor.appendChild(lines);
```
FILE: styles.css
```css
* { box-sizing: border-box; margin: 0; padding: 0; }
body { width: 2457px; height: 1967px; overflow: hidden; background: #080e14; color: #dfe1e4; font: 21px/1 Inter, "Noto Sans CJK SC", sans-serif; }
i, em { font-style: normal; }
svg { display: block; flex: none; }
.defs { position: absolute; }
.l { fill: none; stroke: currentColor; stroke-width: var(--sw, 2); }
.dim { opacity: .6; }
.app { display: flex; flex-direction: column; gap: 8px; height: 1967px; padding: 7px 6px 2px 7px; border-left: 3px solid #1b2024; }
.row { display: flex; }
.top { gap: 7px; height: 994px; }
.bottom { gap: 7px; height: 956px; }
.area { position: relative; overflow: hidden; border-radius: 10px; display: flex; flex-direction: column; white-space: nowrap; }
.view3d { width: 1365px; background: #14171c; }
.sheet { flex: 1; background: #0f161c; }
.nodes { width: 1370px; background: #131a23; }
.props { flex: 1; background: #19242e; }
.i { width: 28px; height: 28px; }
.w30 { width: 30px; }
.c { width: 14px; height: 14px; }
.sep { width: 14px; height: 20px; }
.off { opacity: .25; }
.half { opacity: .6; }
.gray { color: #9aa0a6; }
.push { flex: 1; }
.btn { display: flex; align-items: center; height: 36px; background: #030609; border-radius: 6px; flex: none; color: #e6e6e6; }
.btn > .i { margin-left: 7px; }
.btn > .c { margin-left: 4px; }
.w57 { width: 57px; } .w58 { width: 58px; } .w59 { width: 59px; } .w60 { width: 60px; }
.blue { background: #29446e; color: #fff; }
.head { display: flex; align-items: center; height: 48px; background: #1b2933; padding-left: 14px; flex: none; }
.cell { width: 38px; height: 36px; display: flex; align-items: center; justify-content: center; flex: none; }
.dk { background: #090c14; margin-left: 1px; }
.bk { background: #030609; }

/* 3D viewport */
.scene { position: absolute; inset: 0; width: 1365px; height: 994px; }
.gridline { fill: none; stroke: #292e3b; stroke-width: 2.8; }
.ax { fill: none; stroke-width: 3; }
.ax.g { stroke: #587a2c; }
.ax.r { stroke: #8c3a59; }
.edge { fill: none; stroke: #050505; stroke-width: 1.6; }
.edge.dash { stroke-dasharray: 6 3; }
.edge.long { stroke-dasharray: 11 3; }
.edge.dot { stroke-dasharray: 3 2; stroke-width: 1.3; }
.rim { fill: none; stroke: #fff; stroke-width: 4; stroke-dasharray: 1.5 1.5; }
.giz path { stroke-width: 4; }
.giz text { font: 500 20px Inter, sans-serif; text-anchor: middle; fill: #111a22; }
.bar { position: relative; display: flex; align-items: center; flex: none; }
.one { height: 47px; padding: 0 0 0 16px; }
.mode { width: 165px; margin-left: 14px; }
.mode span { margin-left: 13px; }
.mode > .c { margin-left: 15px; }
.menus { display: flex; gap: 4px; margin-left: 14px; }
.menus span { width: 68px; height: 36px; background: #1c2731; border-radius: 6px; display: flex; align-items: center; justify-content: center; }
.menus .gis { width: 64px; font-size: 20px; }
.drop { width: 58px; height: 41px; border: 2px solid #1d202c; background: #14171c; margin-right: 4px; }
.drop > .i { margin-left: 13px; }
.bev { width: 56px; margin-right: 5px; }
.bev > .i { margin-left: 2px; } .bev > .c { margin-left: 9px; }
.rh { width: 36px; background: #10131a; margin-right: 33px; }
.rh svg { width: 32px; height: 32px; }
.glob { width: 114px; margin-right: 14px; }
.glob > .i { margin-left: 6px; }
.glob span { margin-left: 14px; }
.glob > .c { margin-left: 7px; }
.piv { margin-right: 13px; }
.mag { display: flex; width: 64px; height: 36px; overflow: hidden; border-radius: 6px 0 0 6px; background: #06090d; }
.navy { width: 37px; background: #1b2433; padding: 4px; flex: none; }
.inc { padding: 6px 0 0 6px; }
.two { height: 53px; padding-left: 15px; align-items: center; }
.sel { display: flex; border-radius: 5px; overflow: hidden; gap: 2px; }
.sel div { width: 35.2px; height: 35px; background: #07090c; padding: 3.5px; }
.sel svg { width: 28px; height: 28px; }
.sel .on { background: #1d4463; }
.opt { width: 87px; margin-left: 319px; padding-left: 14px; }
.opt > .c { margin-left: 14px; }
.strip { display: flex; margin-left: 21px; border: 1px solid #1d2230; border-radius: 6px; overflow: hidden; height: 37px; width: 622px; }
.strip div { flex: 1; background: #0b0e14; border-right: 1px solid #1d2230; display: flex; align-items: center; justify-content: center; }
.strip svg { width: 30px; height: 29px; }
.strip .on { background: #29446e; flex: 0 0 36px; }
.two .f { width: 36px; margin-left: 15px; }
.two .f > .i, .two .g > .i { margin-left: 4px; }
.two .g { width: 37px; margin-left: 13px; border: 1px solid #1d2230; background: #0b0e14; }
.lower { position: relative; display: flex; margin-top: 13px; }
.tools { display: flex; flex-direction: column; gap: 9.3px; margin-left: 14px; }
.grp { width: 77px; border: 2px solid #223544; border-radius: 9px; overflow: hidden; background: #101820; }
.tool { height: 65.8px; display: flex; align-items: center; justify-content: center; position: relative; }
.tall .tool { height: 66.9px; }
.tool + .tool { border-top: 2px solid #223544; }
.tool.on { background: #2e4e66; }
.tool svg { width: 47px; height: 47px; margin-right: 2px; }
.tool.more::after { content: ""; position: absolute; right: 4px; bottom: 4px; border: 4px solid; border-color: transparent #a5a8aa #a5a8aa transparent; }
.info { margin-left: 35px; padding-top: 6px; color: #f0f0f0; font-size: 21.3px; }
.info p { height: 35px; line-height: 22px; }

/* Spreadsheet */
.vn { width: 170px; margin-left: 12px; padding-left: 14px; }
.vn > .c { margin-left: 32px; }
.sheet .a1 { margin-left: 16px; } .a2 { margin: 0 31px 0 17px; } .sheet .a3 { margin-left: 31px; } .a4 { margin: 0 32px 0 18px; } .a6 { margin-left: 29px; } .sheet .a7 { margin-left: 22px; }
.cur { width: 22px; height: 22px; margin-right: 8px; }
.sheet .head .f { width: 37px; margin-right: 15px; }
.sheet .head .f > .i { margin-left: 4px; }
.sheetbody { display: flex; flex: 1; overflow: hidden; }
aside { width: 308px; flex: none; padding: 16px 0 0 14px; }
.tree { list-style: none; width: 278px; height: 521px; border: 2px solid #3e4548; border-radius: 8px; padding: 5px 8px; background: #0f151a; }
.tree li { height: 42.05px; display: flex; align-items: center; position: relative; padding-left: 1px; }
.tree .c { width: 20px; height: 20px; margin-right: 9px; --sw: 1.6; }
.tree span { margin-left: 18px; }
.tree .k { padding-left: 57px; }
.tree .n { padding-left: 30px; }
.tree b { margin-left: auto; margin-right: 9px; font-weight: 400; color: #71777d; font-size: 20.8px; }
.tree .cursel b { color: #8ea2b5; }
.tree .k::before { content: ""; position: absolute; left: 13px; top: 0; bottom: 0; width: 1px; background: #3a4148; }
.tree .cursel { background: #3a5a7a; height: 35px; margin: 3.5px 0; border-radius: 6px; }
.table { flex: 1; position: relative; overflow: hidden; height: 898px; }
.tr { display: grid; grid-template-columns: 57px 117px 147px 181px 1fr; height: 39px; background: #131a23; }
.tr > * { border-right: 2px solid #0b1118; display: flex; align-items: center; justify-content: flex-end; padding-right: 5px; font-size: 20.8px; color: #c9ccd0; }
.tr > em { border: 0; }
.tr > i { background: #1d242c; }
#rows .tr:nth-child(even) { background: #191f29; }
#rows .tr:nth-child(even) > i { background: #232930; }
#rows .tr > span:nth-child(3) { justify-content: center; padding: 0 3px 0 0; }
.th { height: 42.5px; background: #20262d; border-bottom: 2px solid #0b1118; }
.th > i { background: none; }
.th > span { justify-content: center; padding: 1px 3px 0 0; font-size: 20.8px; color: #b4b8bd; }
.chk { width: 20px; height: 20px; }
.mark { position: absolute; left: 56px; top: 32px; width: 128px; height: 866px; border: 4px solid #f81408; border-radius: 26px; }
.tog { position: absolute; right: 1px; top: 33px; width: 12px; height: 20px; color: #a0a4a8; }
footer { height: 48px; background: #14222c; display: flex; align-items: center; justify-content: flex-end; padding: 2px 15px 0 0; flex: none; }
footer i { width: 2px; height: 24px; background: #cfd2d5; margin: 0 21px; }

/* Node editor */
.nodes .head { padding-left: 15px; }
.nodes .head .i { flex: none; }
.mod { width: 129px; margin-left: 11px; padding-left: 16px; }
.mod > .c { margin-left: 32px; }
.flat { display: flex; gap: 30.2px; margin-left: 25px; }
.idf { display: flex; margin-left: 44px; border-radius: 6px; overflow: hidden; }
.idf .btn { border-radius: 0; }
.name { width: 161px; height: 36px; background: #080c12; padding-left: 16px; display: flex; align-items: center; color: #fff; }
.idf .half { width: 40px; }
.idf .dk { width: 38px; }
.np { margin-left: 16px; }
.upb { width: 35px; background: #17212a; margin-left: 77px; border-radius: 6px; }
.mg { width: 36px; margin-left: 13px; background: #1b2433; }
.sn { width: 61px; }
.sn > .i { margin-left: 8px; }
.sn > .c { margin-left: 8px; }
.ov { width: 35px; margin-left: 12px; border-radius: 6px 0 0 6px; }
.ov > .i { margin-left: 3px; }
.ovd { width: 39px; border-radius: 0 6px 6px 0; }
.ovd > .c { margin-left: 12px; }
.fl { margin-left: 38px; }
.gr { width: 36px; margin-left: 19px; background: #0b0f14; }
.gr > .i { margin-left: 4px; }
.canvas { position: relative; flex: 1; background:
  radial-gradient(circle, #4b525a 2.4px, transparent 3.2px) -6.8px -94.3px / 224.5px 224.5px,
  radial-gradient(circle, #3b434b 1.6px, transparent 2.4px) -7.1px -4.7px / 44.9px 44.9px; }
.wires { position: absolute; inset: 0; width: 1370px; height: 908px; fill: none; }
.crumbs { position: absolute; left: -3px; top: 29px; height: 28px; display: flex; align-items: center; }
.crumbs span { margin: 0 30px 0 18px; }
.crumbs .sep + .i { margin-left: 17px; }
.crumbs .e0 { color: #a0a4a8; }
.crumbs .sep + .e1 { margin-left: 24px; }
.node { position: absolute; background: #1b2535; border-radius: 9px; box-shadow: 0 3px 14px #05080c, 0 0 0 2px #0a0f16; font-size: 24.9px; }
.node h3 { height: 47px; border-radius: 9px 9px 0 0; display: flex; align-items: center; font-weight: 400; font-size: 24.9px; padding: 0 0 2px 25px; border-bottom: 2px solid #131b26; }
.node h3 .c { width: 24px; height: 24px; margin-right: 9px; --sw: 1.2; }
.node p { height: 30px; line-height: 30px; }
.out { text-align: right; margin-right: 26px; }
.in { margin-left: 25px; }
.n1 { left: 43px; top: 329px; width: 318px; height: 164px; border: 3px solid #4767b3; background: #1c2840; }
.n1 h3 { background: #1b202a; border-radius: 6px 6px 0 0; padding-left: 22px; padding-bottom: 4px; }
.n1 .out { margin-top: 15px; margin-right: 25px; }
.n2 { left: 516px; top: 272px; width: 315px; height: 264px; }
.n2 h3 { background: #13635a; }
.n2 .out { margin-top: 16px; }
.n2 .out + .in { margin-top: 25px; }
.n2 .in + .in { margin-top: 19px; }
.field { display: flex; align-items: center; background: #080c12; border-radius: 7px; }
.n2 .field { margin: 11px 0 0 24px; width: 268px; height: 45px; padding: 0 12px 0 10px; color: #fff; }
.n2 .field .i { width: 32px; height: 32px; }
.n2 .field span { margin-left: 15px; }
.n2 .field .fx { margin-left: auto; width: 30px; height: 30px; color: #bbb; }
.n3 { left: 513px; top: 573px; width: 315px; height: 111px; }
.n3 h3 { background: #67283f; }
.n3 .out { margin-top: 15px; }
.n4 { left: 1002px; top: 218px; width: 315px; height: 214px; }
.n4 h3 { background: #4f2638; padding-left: 23px; padding-right: 21px; }
.n4 .eye { width: 30px; height: 20px; margin-left: auto; }
.n4 .field { background: #030609; margin: 14px 0 0 23px; width: 267px; height: 42px; padding: 0 7px 0 19px; }
.n4 .field .c { width: 16px; height: 16px; margin-left: auto; }
.n4 .field + .in { margin-top: 14px; }
.n4 .in + .in { margin-top: 18px; }
.vs { position: absolute; left: 1358px; top: 16px; width: 9px; height: 862px; border-radius: 4px; background: #1c2630; }
.hs { position: absolute; left: 16px; bottom: 4px; width: 657px; height: 7px; border-radius: 4px; background: #1a232c; }
.canvas .tog { right: 0; top: 33px; }

/* Properties editor */
.props .head { height: 50px; background: #19252f; padding-left: 15px; }
.search { width: 225px; height: 37px; background: #0a0e15; border-radius: 6px; margin-left: 348px; display: flex; align-items: center; padding-left: 10px; }
.search span { margin-left: 14px; color: #5f656c; }
.pd { width: 35px; margin-left: 366px; }
.pd > .c { margin-left: 11px; }
.pbody { display: flex; flex: 1; overflow: hidden; }
.tabs { width: 54px; padding: 13px 0 0 4px; background: #111a22; flex: none; }
.tab { height: 54px; background: #0e141c; display: flex; align-items: center; justify-content: center; color: #c4c6c9; }
.tab svg { width: 28px; height: 28px; }
.tab.solo { border-radius: 8px 0 0 8px; margin-bottom: 15px; }
.tab.first { border-top-left-radius: 8px; }
.tab.last { border-bottom-left-radius: 8px; }
.last + .first { margin-top: 15px; }
.act + .first { margin-top: 15px; }
.tab.act { background: #2a4256; color: #e8727c; border-radius: 8px 0 0 8px; }
.tab.pink { color: #b95763; } .tab.orange { color: #c8864e; } .tab.bl { color: #6d95d8; } .tab.green { color: #14b98c; }
main { width: 992px; padding-left: 15px; overflow: hidden; flex: none; }
.pc { display: flex; align-items: center; height: 28px; margin: 18px 0 0 5px; }
.pc span { margin: 0 30px 0 19px; }
.pc .sep + .i { margin-left: 18px; }
.pc .lst { margin-left: 18px; }
.pc .pp { margin-left: auto; margin-right: 1px; }
.slots { display: flex; margin-top: 37px; }
.list { width: 928px; height: 231px; border: 2px solid #3d4446; border-radius: 7px; background: #181e26; padding: 7px 9px 0; }
.slot { display: flex; align-items: center; height: 35px; margin-bottom: 4.5px; position: relative; }
.sl { background: #3a5876; border-radius: 6px; }
.slot span { position: relative; width: 119px; margin-left: 18px; }
.ball { width: 24px; height: 26px; border-radius: 50%; margin-left: 7px; }
.red { background: radial-gradient(circle at 38% 42%, #ff9080, #e02a1c 35%, #8c140d); }
.blu { background: radial-gradient(circle at 38% 42%, #7a9cff, #1f4fd8 35%, #102a80); }
.grn { background: radial-gradient(circle at 38% 42%, #b0f098, #5cc44a 35%, #267a1c); }
.slot strong { font: 900 27.5px/1 Inter, "Noto Sans CJK SC", sans-serif; letter-spacing: -.3px; color: #f81810; text-shadow: 1px 1px 0 #7fb0d8, -1px 0 0 #7fb0d8; padding-top: 2px; }
.slot .low { padding-top: 7px; }
.ring { position: absolute; left: -10px; top: -4px; width: 136px; height: 46px; border: 4px solid #f81408; border-radius: 32px / 23px; }
.lf { display: flex; align-items: center; margin-top: 71px; height: 34px; }
.lf svg { width: 12px; height: 12px; margin-left: 11px; }
.lf .grip { margin-left: 437px; }
.grip { width: 22px; height: 8px; background: radial-gradient(circle, #a6abb0 1.1px, transparent 1.6px) 0 0 / 5.5px 5px; }
.side { width: 32px; margin: 2px 0 0 17px; overflow: hidden; }
.side .cell { margin: 0 0 1px; height: 35.500px; width: 36px; }
.side .t { border-radius: 6px 0 0 0; } .side .b { border-radius: 0 0 0 6px; margin-bottom: 15px; } .side .v { border-radius: 6px; margin-bottom: 16px; }
.idrow { display: flex; align-items: center; margin-top: 8px; height: 39px; width: 977px; overflow: hidden; }
.idrow .btn { margin-left: 2px; }
.idrow .name { width: 560px; height: 39px; flex: none; }
.users { width: 164px; height: 35px; background: #0c1018; margin-left: 2px; display: flex; align-items: center; justify-content: center; flex: none; }
.idrow .half { width: 39px; } .idrow .dk { width: 38px; margin-left: 1.5px; }
.idrow .lk { margin-left: 17px; width: 62px; }
.idrow .lk > .c { margin-left: 5px; }
.panel { height: 48px; background: #2a3240; margin-top: 18px; display: flex; align-items: center; width: 977px; padding: 0 9px 0 19px; border-radius: 7px 0 0 0; font-size: 22px; color: #c8ccd2; }
.panel span { margin-left: 10px; }
.panel .sep { width: 14px; --sw: 1.6; }
.panel .grip { margin-left: auto; }
.open { margin-top: 4px; padding-left: 13px; }
.open .cc { width: 22px; height: 22px; margin-right: -3px; --sw: 1.2; }
.form { width: 977px; height: 440px; background: #1b2027; padding-top: 15px; }
.fr { display: flex; align-items: center; height: 36px; margin-bottom: 12px; }
.fr.wide { margin-bottom: 32px; }
.fr label { width: 370px; text-align: right; margin-right: 20px; }
.val { width: 535px; height: 36px; background: #030609; border-radius: 6px; display: flex; align-items: center; }
.val span { margin-left: 15px; color: #c8cbd0; }
.so { width: 15px; height: 15px; border-radius: 50%; background: #a1a1a1; margin-left: 10px; flex: none; }
.lg { background: #63c763; } .yl { background: #c7c729; } .pu { background: #6363c7; }
.sk { width: 36px; height: 36px; background: #030609; border-radius: 6px 0 0 6px; display: flex; align-items: center; }
.sld { width: 498px; height: 36px; margin-left: 1px; background: #090c12; border-radius: 0 5px 5px 0; display: flex; align-items: center; justify-content: center; border: 1px solid #090c12; padding-right: 2px; }
.sld.color { background: #00ec0c; }
.sld.halfway { background: linear-gradient(90deg, #1a374d 49.500%, #090c12 49.500%); }
.sld.plain { background: #0e121b; }
.sld.full { background: #1a374d; }
.kf { width: 8px; height: 8px; border-radius: 50%; background: #c8c8c8; margin-left: 16px; }
.sub { display: flex; align-items: center; height: 36px; padding-left: 28px; }
.sub span { margin-left: 24px; }
.sb { flex: 1; background: #131e27; margin-right: 3px; position: relative; }
.sb i { display: block; height: 275px; width: 15px; margin-top: 17px; border-radius: 7px; background: #35424f; }
```
